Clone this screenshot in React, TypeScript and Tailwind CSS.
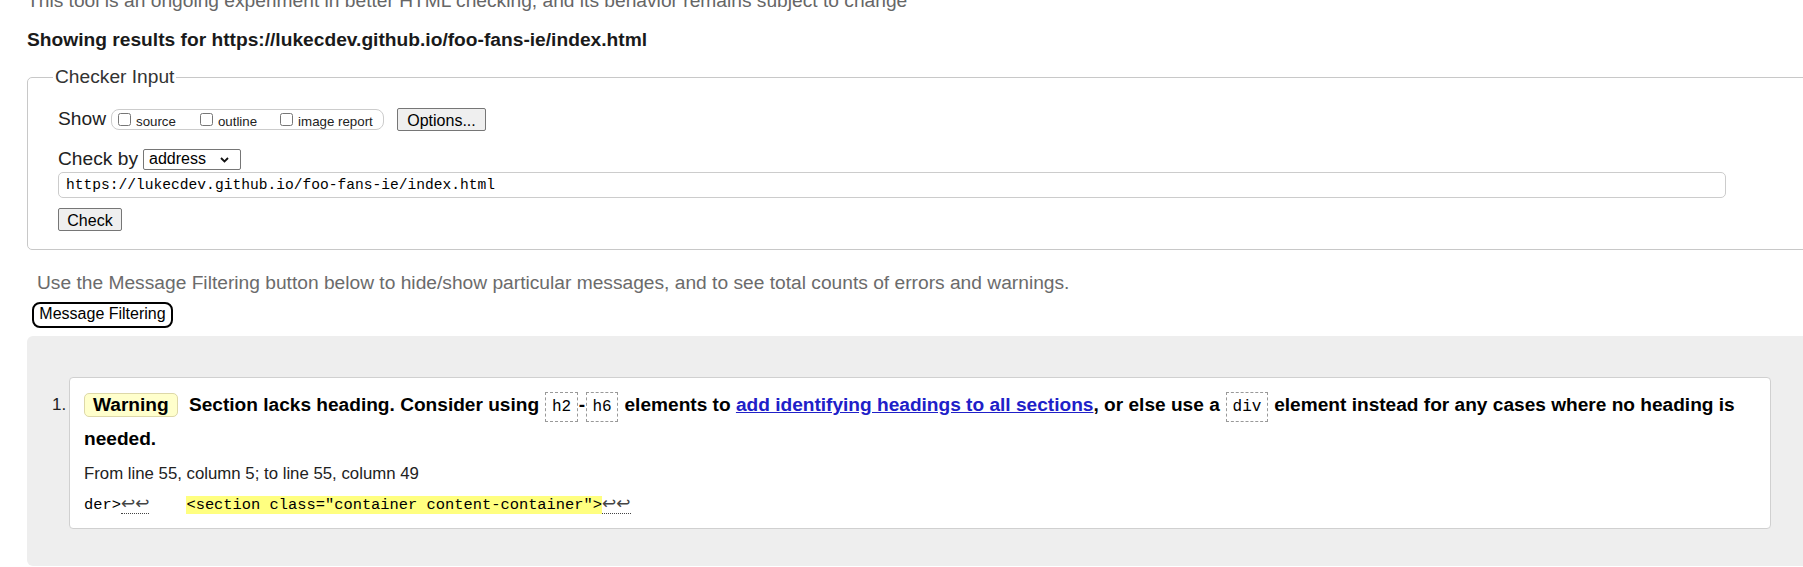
import React from 'react';

const mono = "font-['Liberation_Mono','DejaVu_Sans_Mono',monospace]";

function CodeBox({ children }: { children: React.ReactNode }) {
  return (
    <code className={`${mono} font-normal text-[16px] leading-[18px] border border-dashed border-[#999] px-[5.5px] py-[5px] mx-[1px]`}>
      {children}
    </code>
  );
}

function Newlines() {
  return (
    <span className="text-[#444] border-b border-dotted border-[#444] font-['DejaVu_Sans',sans-serif] text-[17px] leading-[18px]">↩↩</span>
  );
}

export default function App() {
  return (
    <div className="h-[567px] w-full overflow-hidden bg-white text-[#222] font-['Liberation_Sans',Arial,sans-serif]">
      <div className="pl-[27px]">
        <p className="-mt-[10px] text-[19.2px] leading-[22px] text-[#666]">
          This tool is an ongoing experiment in better HTML checking, and its behavior remains subject to change
        </p>

        <h2 className="mt-[17px] text-[19.2px] leading-[22px] font-bold text-[#1a1a1a]">
          Showing results for https://lukecdev.github.io/foo-fans-ie/index.html
        </h2>

        <fieldset className="mt-[15px] w-[1800px] border border-[#c8c8c8] rounded-[5px] pl-[30px] pt-[20px] pb-[18px]">
          <legend className="-ml-[5px] px-[2px] text-[19.2px] leading-[22px] text-[#333]">Checker Input</legend>

          <div className="flex items-center h-[23px] text-[19.2px]">
            <span>Show</span>
            <div className="ml-[5px] flex items-center h-[21px] w-[273px] border border-[#ccc] rounded-[8px] pl-[6px] text-[13.3px]">
              <label className="flex items-center">
                <input type="checkbox" className="m-0 w-[13px] h-[13px]" />
                <span className="ml-[5px] mt-[5px]">source</span>
              </label>
              <label className="flex items-center ml-[24px]">
                <input type="checkbox" className="m-0 w-[13px] h-[13px]" />
                <span className="ml-[5px] mt-[5px]">outline</span>
              </label>
              <label className="flex items-center ml-[23px]">
                <input type="checkbox" className="m-0 w-[13px] h-[13px]" />
                <span className="ml-[5px] mt-[5px]">image report</span>
              </label>
            </div>
            <button className="ml-[13px] h-[23px] w-[89px] bg-[#efefef] border border-[#767676] rounded-[2px] text-[16px] text-black">
              Options...
            </button>
          </div>

          <div className="mt-[17px] flex items-center h-[22px] text-[19.2px]">
            <span>Check by</span>
            <div className="ml-[5px] flex items-center justify-between h-[21px] w-[98px] border border-[#767676] rounded-[2px] pl-[5px] pr-[11px] text-[16px] text-black">
              <span>address</span>
              <svg width="9" height="6" viewBox="0 0 9 6" className="mt-[1px]">
                <path d="M1 1l3.5 3.5L8 1" fill="none" stroke="#111" strokeWidth="1.8" />
              </svg>
            </div>
          </div>

          <input
            readOnly
            value="https://lukecdev.github.io/foo-fans-ie/index.html"
            className={`${mono} block mt-[2px] h-[26px] w-[1668px] border border-[#ccc] rounded-[5px] px-[7px] text-[14.6px] text-black`}
          />

          <button className="block mt-[10px] h-[23px] w-[64px] bg-[#efefef] border border-[#767676] rounded-[2px] text-[16px] text-black">
            Check
          </button>
        </fieldset>

        <p className="mt-[22px] ml-[10px] text-[19.2px] leading-[22px] text-[#6b6b6b]">
          Use the Message Filtering button below to hide/show particular messages, and to see total counts of errors and warnings.
        </p>

        <button className="mt-[8px] ml-[5px] h-[26px] w-[141px] border-2 border-black rounded-[8px] bg-white text-[16px] leading-[20px] text-black pb-[3px]">
          Message Filtering
        </button>

        <div className="mt-[8px] h-[230px] w-[1800px] bg-[#eeeeee] rounded-[6px] pl-[25px] pt-[41px]">
          <ol className="flex">
            <span className="w-[17px] mt-[11px] text-[17px] leading-[33px] text-[#222]">1.</span>
            <li className="w-[1702px] bg-white border border-[#d0d0d0] rounded-[4px] pl-[14px] pr-[30px] pt-[10px] pb-[12px]">
              <p className="text-[19.1px] leading-[34px] font-bold text-black">
                <span className="inline-block mr-[6px] px-[8px] leading-[22px] bg-[#ffffcc] border border-[#ddd8a8] rounded-[5px]">Warning</span>{' '}
                Section lacks heading. Consider using <CodeBox>h2</CodeBox>-<CodeBox>h6</CodeBox> elements to{' '}
                <a href="#" className="text-[#2020c8] underline">add identifying headings to all sections</a>, or else use a{' '}
                <CodeBox>div</CodeBox> element instead for any cases where no heading is needed.
              </p>
              <p className="mt-[7px] text-[16.8px] leading-[22px] text-[#222]">
                From line 55, column 5; to line 55, column 49
              </p>
              <p className={`${mono} mt-[9px] text-[15.4px] leading-[22px] text-black whitespace-pre`}>
                der&gt;<Newlines />{'    '}
                <span className="bg-[#ffff80]">&lt;section class="container content-container"&gt;</span>
                <Newlines />
              </p>
            </li>
          </ol>
        </div>
      </div>
    </div>
  );
}
